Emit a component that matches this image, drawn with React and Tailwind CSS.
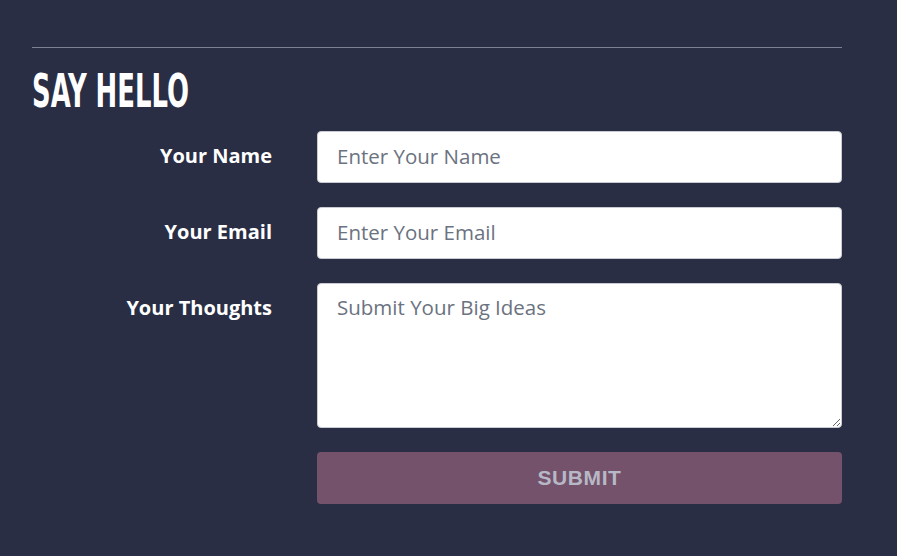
export default function App() {
  const label = "text-right text-white font-bold text-[20px] leading-[26px] pt-[12px] [font-family:'Open_Sans','Noto_Sans',sans-serif]";
  const field =
    "w-full bg-white border border-[#c8cbd2] rounded-[4px] px-[19px] text-[20.5px] text-[#333] placeholder:text-[#6b7280] outline-none [font-family:'Open_Sans','Noto_Sans',sans-serif]";
  return (
    <div className="min-h-[556px] w-[897px] bg-[#292e44] pt-[47px] pl-[32px]">
      <div className="w-[810px]">
        <div className="h-px bg-[#7e8194]" />
        <h2 className="mt-[21px] h-[44px] text-white text-[46px] leading-[44px] font-bold uppercase origin-left scale-x-[0.625] whitespace-nowrap [font-family:'DejaVu_Sans_Condensed','DejaVu_Sans',sans-serif]">
          Say Hello
        </h2>
        <form className="mt-[18px] grid grid-cols-[240px_525px] gap-x-[45px] gap-y-[24px]">
          <label className={label}>Your Name</label>
          <input className={field + " h-[52px] pb-[3px]"} placeholder="Enter Your Name" />
          <label className={label}>Your Email</label>
          <input className={field + " h-[52px] pb-[3px]"} placeholder="Enter Your Email" />
          <label className={label}>Your Thoughts</label>
          <textarea className={field + " h-[145px] pt-[10px] leading-[26px] block"} placeholder="Submit Your Big Ideas" />
          <div />
          <button
            type="button"
            className="h-[52px] rounded-[4px] bg-[#74526b] text-[#b7b8c6] font-bold text-[21px] tracking-[0.6px] uppercase [font-family:'Liberation_Sans',Arial,sans-serif]"
          >
            Submit
          </button>
        </form>
      </div>
    </div>
  );
}
